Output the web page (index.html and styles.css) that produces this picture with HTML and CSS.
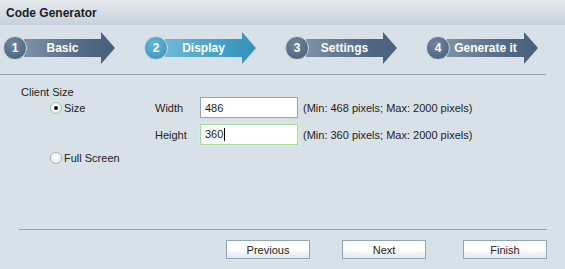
FILE: index.html
```html
<!DOCTYPE html>
<html>
<head>
  <meta charset="UTF-8">
  <title>Code Generator</title>
  <link rel="stylesheet" href="styles.css">
</head>
<body>

<div class="header">Code Generator</div>

<div class="steps">
  <div class="step">
    <span class="num">1</span>
    <span class="arrow">Basic</span>
  </div>
  <div class="step active">
    <span class="num">2</span>
    <span class="arrow">Display</span>
  </div>
  <div class="step">
    <span class="num">3</span>
    <span class="arrow">Settings</span>
  </div>
  <div class="step">
    <span class="num">4</span>
    <span class="arrow">Generate it</span>
  </div>
</div>

<div class="rule"></div>

<div class="content">
  <div class="groupTitle">Client Size</div>

  <div class="row">
    <label class="option"><span class="radio checked"></span>Size</label>
    <span class="fieldLabel">Width</span>
    <input type="text" class="field" value="486">
    <span class="hint">(Min: 468 pixels; Max: 2000 pixels)</span>
  </div>

  <div class="row second">
    <span class="option"></span>
    <span class="fieldLabel">Height</span>
    <div class="field focused">360<span class="caret"></span></div>
    <span class="hint">(Min: 360 pixels; Max: 2000 pixels)</span>
  </div>

  <div class="row third">
    <label class="option"><span class="radio"></span>Full Screen</label>
  </div>
</div>

<div class="footer">
  <div class="rule bottom"></div>
  <div class="buttons">
    <button class="prev">Previous</button>
    <button class="next">Next</button>
    <button>Finish</button>
  </div>
</div>

</body>
</html>
```

FILE: styles.css
```css
body {
  margin: 0;
  width: 565px;
  height: 269px;
  background: #d9e1e8;
  color: #222;
  font-family: "Liberation Sans", Arial, sans-serif;
  font-size: 11px;
  overflow: hidden;
}

.header {
  height: 25px;
  line-height: 27px;
  padding-left: 6px;
  background: linear-gradient(#e6ebf0, #c6d1db);
  font-weight: bold;
  font-size: 12px;
  color: #1e1e1e;
}

.steps {
  display: flex;
  gap: 29px;
  margin-top: 7px;
  padding-left: 3px;
  height: 32px;
}

.step {
  display: flex;
  align-items: center;
}

.num {
  position: relative;
  z-index: 1;
  width: 22px;
  height: 22px;
  border: 1.5px solid #c9d3dc;
  border-radius: 50%;
  background: radial-gradient(circle at 40% 30%, #71879f, #475d78);
  color: #fff;
  font-weight: bold;
  font-size: 12px;
  line-height: 22px;
  text-align: center;
}

.arrow {
  width: 91px;
  height: 32px;
  margin-left: -3px;
  padding-right: 14px;
  box-sizing: border-box;
  clip-path: polygon(0 7px, 77px 7px, 77px 0, 91px 16px, 77px 32px, 77px 25px, 0 25px);
  background: linear-gradient(to right, #7d91a6, #4f6781 70%, #4a617b);
  color: #fff;
  font-weight: bold;
  font-size: 12px;
  line-height: 32px;
  text-align: center;
}

.active .num {
  background: radial-gradient(circle at 40% 30%, #62b5d8, #3a91ba);
}

.active .arrow {
  background: linear-gradient(to right, #6fb9d8, #3f9cc4 70%, #3890b8);
}

.rule {
  height: 1px;
  width: 546px;
  margin-top: 10px;
  background: #9aa2aa;
}

.content {
  padding: 11px 0 0 21px;
}

.groupTitle {
  height: 11px;
}

.row {
  display: flex;
  align-items: center;
  height: 21px;
}

.row.second {
  margin-top: 6px;
}

.row.third {
  margin-top: 2px;
}

.option {
  display: flex;
  align-items: center;
  width: 105px;
  margin-left: 29px;
}

.radio {
  width: 10px;
  height: 10px;
  margin-right: 2px;
  border: 1px solid #a9b2ba;
  border-radius: 50%;
  background: radial-gradient(circle at 35% 30%, #fff, #e6e9ec);
}

.radio.checked {
  position: relative;
  border-color: #9cc79a;
  box-shadow: 0 0 0 1px #d4ecd0;
}

.radio.checked::after {
  content: "";
  position: absolute;
  left: 3px;
  top: 3px;
  width: 4px;
  height: 4px;
  border-radius: 50%;
  background: #111;
}

.fieldLabel {
  width: 45px;
}

.field {
  width: 98px;
  height: 21px;
  box-sizing: border-box;
  padding: 0 4px;
  border: 1px solid #8fa6bc;
  background: #fff;
  font-family: inherit;
  font-size: 11px;
  color: #222;
  line-height: 19px;
}

.field.focused {
  border-color: #a6d99a;
  box-shadow: 0 0 0 1px #d3f2cb;
}

.caret {
  display: inline-block;
  width: 1px;
  height: 13px;
  margin-left: 1px;
  vertical-align: -3px;
  background: #000;
}

.hint {
  margin-left: 5px;
}

.footer {
  padding-left: 19px;
  margin-top: 61px;
}

.rule.bottom {
  width: 528px;
  margin-top: 0;
}

.buttons {
  display: flex;
  margin-top: 10px;
  padding-left: 207px;
}

.buttons button {
  width: 84px;
  height: 19px;
  padding: 0;
  border: 1px solid #8ea7bd;
  background: linear-gradient(#fff 45%, #e3e7eb);
  font-family: inherit;
  font-size: 11px;
  color: #222;
}

.prev {
  margin-right: 32px;
}

.next {
  margin-right: 37px;
}
```
